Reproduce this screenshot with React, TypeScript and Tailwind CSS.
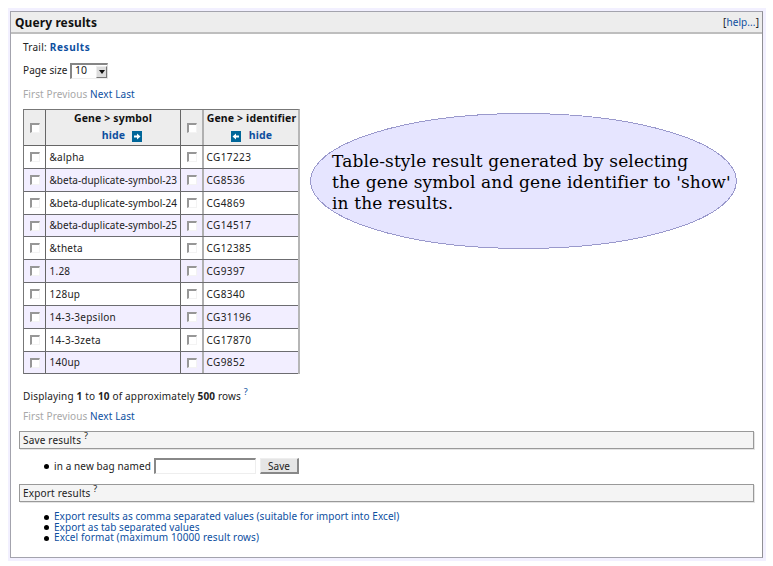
import React from "react";

const rows = [
  ["&alpha", "CG17223", "h-[23px]"],
  ["&beta-duplicate-symbol-23", "CG8536", "h-[23px]"],
  ["&beta-duplicate-symbol-24", "CG4869", "h-[23px]"],
  ["&beta-duplicate-symbol-25", "CG14517", "h-[22px]"],
  ["&theta", "CG12385", "h-[23px]"],
  ["1.28", "CG9397", "h-[23px]"],
  ["128up", "CG8340", "h-[23px]"],
  ["14-3-3epsilon", "CG31196", "h-[23px]"],
  ["14-3-3zeta", "CG17870", "h-[23px]"],
  ["140up", "CG9852", "h-[22px]"],
];

const exportsList = [
  "Export results as comma separated values (suitable for import into Excel)",
  "Export as tab separated values",
  "Excel format (maximum 10000 result rows)",
];

const Check = () => (
  <span className="block size-[10px] border-t-2 border-l-2 border-r border-b border-t-[#979797] border-l-[#979797] border-r-[#f3f3f3] border-b-[#f3f3f3] bg-white" />
);

const Arrow = ({ left = false }: { left?: boolean }) => (
  <svg width="10" height="11" viewBox="0 0 10 11" className={left ? "mt-px -scale-x-100" : "mt-px"}>
    <rect width="10" height="11" fill="#006699" />
    <path d="M2 4.5h3V2.5L8.5 5.5 5 8.5V6.5H2z" fill="#fff" />
  </svg>
);

const Pager = () => (
  <div className="h-4 pl-3 leading-4 tracking-[0.1px] text-[#a8a8a8]">
    First Previous <a className="text-[#0d4f9f]">Next</a> <a className="text-[#0d4f9f]">Last</a>
  </div>
);

const Section = ({ title }: { title: string }) => (
  <div className="mx-2 h-[18px] border border-[#999] bg-[#f4f4f4] pl-[3px] leading-[17px] tracking-[0.18px] shadow-[1px_1px_0_#e4e4e4] whitespace-nowrap">
    {title} <span className="relative -top-[5px] text-[9px]">?</span>
  </div>
);

export default function App() {
  return (
    <div className="h-[566px] w-[773px] bg-white pt-2 pl-2 font-['Noto_Sans',sans-serif] text-[10px] tracking-[0.08px] text-[#222]">
      <div className="h-[553px] w-[758px] bg-[#f2f0ff] pt-[3px] pl-[2px]">
        <div className="relative h-[547px] w-[753px] border border-[#a3a3ad] border-r-[#8f8f94] bg-white">
          <div className="flex h-[22px] items-center justify-between border-b-2 border-[#bebebe] bg-[#ededed] pl-1 pr-[3px]">
            <h1 className="pt-px text-[12px] font-bold tracking-[0.1px] text-[#111]">Query results</h1>
            <span>[<a className="text-[#0d4f9f]">help...</a>]</span>
          </div>
          <div className="mt-[5px] h-4 pl-3 leading-4 tracking-[0.25px]">
            Trail: <b className="tracking-[0.6px] text-[#0d4f9f]">Results</b>
          </div>
          <div className="mt-2 flex h-4 items-center pl-3">
            <span className="w-[47px] pb-px">Page size</span>
            <span className="flex h-4 w-[38px] items-center justify-between border-t-2 border-r border-b border-l-2 border-t-[#858585] border-r-[#ddd] border-b-[#eee] border-l-[#858585] bg-white pl-[3px] text-[10.5px]">
              <span className="pb-px">10</span>
              <span className="flex h-3 w-[11px] items-center justify-center border border-[#eee] border-r-[#777] border-b-[#777] bg-[#ddd]">
                <svg width="6" height="4"><path d="M0 0h6L3 4z" fill="#111" /></svg>
              </span>
            </span>
          </div>
          <div className="mt-[7px]"><Pager /></div>
          <div className="mt-[7px] ml-3 w-[277px] border-t border-r-2 border-l border-t-[#777] border-r-[#b6b6b6] border-l-[#777]">
            <div className="flex h-9 border-b border-[#666] bg-[#ededed] text-[10.5px] font-bold tracking-[0.15px] text-[#111]">
              <div className="flex w-[22px] items-center border-r border-[#666] pl-[6px]"><Check /></div>
              <div className="flex w-[135px] flex-col items-center border-r border-[#666] leading-[17px]">
                <span>Gene &gt; symbol</span>
                <span className="flex items-center gap-[7px] pl-[18px] text-[#0d4f9f]">hide <Arrow /></span>
              </div>
              <div className="flex w-[23px] items-center border-r-2 border-[#b0b0b0] pl-[6px]"><Check /></div>
              <div className="flex flex-1 flex-col items-center pl-px leading-[17px] whitespace-nowrap">
                <span>Gene &gt; identifier</span>
                <span className="flex items-center gap-2 text-[#0d4f9f]"><Arrow left /> hide</span>
              </div>
            </div>
            {rows.map(([a, b, h], i) => (
              <div key={a} className={`flex border-b border-[#6c6c70] ${h} ${i % 2 ? "bg-[#f2eeff]" : "bg-white"}`}>
                <div className="flex w-[22px] items-center border-r border-[#666] pl-[6px]"><Check /></div>
                <div className={`flex w-[135px] items-center border-r border-[#666] pl-[3.5px] whitespace-nowrap ${i > 0 && i < 4 ? "tracking-[0.03px]" : "tracking-[0.25px]"}`}>{a}</div>
                <div className="flex w-[23px] items-center border-r-2 border-[#b0b0b0] pl-[6px]"><Check /></div>
                <div className="flex items-center pl-[2.5px] tracking-[0.4px]">{b}</div>
              </div>
            ))}
          </div>
          <div className="mt-[14px] h-4 pl-3 leading-4 tracking-[0.17px]">
            Displaying <b>1</b> to <b>10</b> of approximately <b>500</b> rows <span className="relative -top-[5px] text-[9px] text-[#0d4f9f]">?</span>
          </div>
          <div className="mt-1"><Pager /></div>
          <div className="mt-[7px]"><Section title="Save results" /></div>
          <div className="mt-[9px] flex h-4 items-center pl-[33px]">
            <span className="mt-px size-[5px] rounded-full bg-black" />
            <span className="ml-[5px] w-[100px] tracking-[0.1px] whitespace-nowrap">in a new bag named</span>
            <span className="h-4 w-[102px] border-t-2 border-r border-b border-l-2 border-t-[#888] border-r-[#eee] border-b-[#eee] border-l-[#888]" />
            <button className="ml-1 h-4 w-[39px] border border-r-2 border-b-2 border-t-[#eee] border-r-[#888] border-b-[#888] border-l-[#eee] bg-[#e5e5e5] leading-3">Save</button>
          </div>
          <div className="mt-[10px]"><Section title="Export results" /></div>
          <ul className="mt-[9px] pl-[33px] leading-[10.6px] tracking-[0.05px] text-[#0d4f9f]">
            {exportsList.map((t, i) => (
              <li key={t} className={`flex items-center gap-[5px] ${i === 2 ? "tracking-[0.12px]" : ""}`}>
                <span className="mt-[2px] size-[5px] rounded-full bg-black" />
                <a>{t}</a>
              </li>
            ))}
          </ul>
          <div className="absolute top-[101px] left-[299px] h-[137px] w-[428px]">
            <svg className="absolute inset-0" width="428" height="137" shapeRendering="crispEdges">
              <ellipse cx="213.5" cy="68" rx="213" ry="67.5" fill="#e6e5ff" stroke="#9a99cc" />
            </svg>
            <p className="relative pt-[38.4px] pl-[22px] font-['DejaVu_Serif',serif] text-[17px] leading-[20.7px] tracking-[0.13px] whitespace-nowrap text-black">
              Table-style result generated by selecting<br />the gene symbol and gene identifier to 'show'<br />in the results.
            </p>
          </div>
        </div>
      </div>
    </div>
  );
}
